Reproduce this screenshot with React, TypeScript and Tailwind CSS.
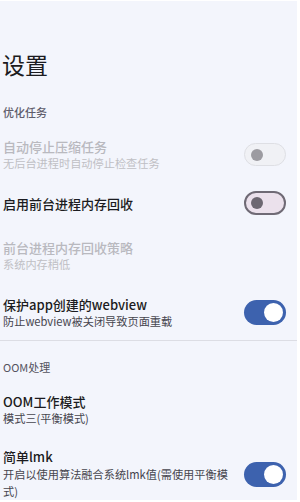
import React from 'react';

type SwitchState = 'disabled' | 'off' | 'on';

const font = { fontFamily: '"Noto Sans CJK SC", "Noto Sans", sans-serif' };

const Toggle: React.FC<{ state: SwitchState }> = ({ state }) => {
    if (state === 'on') {
        return (
            <div className="w-[42px] h-[25px] rounded-full bg-[#3d62ae] flex items-center justify-end pr-[3px] shrink-0">
                <div className="w-[19px] h-[19px] rounded-full bg-white" />
            </div>
        );
    }
    if (state === 'off') {
        return (
            <div className="w-[42px] h-[24px] rounded-full bg-[#ebe1ec] border-2 border-[#6f6a75] flex items-center pl-[5px] shrink-0">
                <div className="w-[12px] h-[12px] rounded-full bg-[#6c6771]" />
            </div>
        );
    }
    return (
        <div className="w-[42px] h-[23px] rounded-full bg-[#f0f1f5] border-[1.5px] border-[#dedfe4] flex items-center pl-[6px] shrink-0">
            <div className="w-[12px] h-[12px] rounded-full bg-[#9c9ba1]" />
        </div>
    );
};

interface ItemProps {
    title: string;
    summary?: string;
    disabled?: boolean;
    toggle?: SwitchState;
    className?: string;
}

const Item: React.FC<ItemProps> = ({ title, summary, disabled, toggle, className = '' }) => (
    <div className={`flex items-center pl-[3px] pr-[11px] ${className}`}>
        <div className="flex-1 min-w-0 pr-[12px]">
            <div className={`text-[13px] leading-[17px] font-medium ${disabled ? 'text-[#b9b9bf]' : 'text-[#1b1b20]'}`}>
                {title}
            </div>
            {summary && (
                <div className={`text-[11.2px] leading-[16px] ${disabled ? 'text-[#bfbfc4]' : 'text-[#46454e]'}`}>
                    {summary}
                </div>
            )}
        </div>
        {toggle && <Toggle state={toggle} />}
    </div>
);

const Section: React.FC<{ label: string; className?: string }> = ({ label, className = '' }) => (
    <div className={`flex items-center pl-[3px] text-[11px] font-medium text-[#5f5d6b] ${className}`}>
        {label}
    </div>
);

export default function App() {
    return (
        <div className="w-[300px] h-[502px] bg-white pt-[1px] pr-[3px] pb-[2px] overflow-hidden" style={font}>
            <div className="h-full bg-[#f3f5fc] flex flex-col">
                <div className="h-[99px] flex items-end pl-[2px] pb-[22px]">
                    <h1 className="text-[23px] leading-[28px] font-normal text-[#1b1b20]">设置</h1>
                </div>
                <Section label="优化任务" className="h-[26px]" />
                <Item
                    className="h-[59px]"
                    title="自动停止压缩任务"
                    summary="无后台进程时自动停止检查任务"
                    disabled
                    toggle="disabled"
                />
                <Item className="h-[38px]" title="启用前台进程内存回收" toggle="off" />
                <Item
                    className="h-[67px]"
                    title="前台进程内存回收策略"
                    summary="系统内存稍低"
                    disabled
                />
                <Item
                    className="h-[48px]"
                    title="保护app创建的webview"
                    summary="防止webview被关闭导致页面重载"
                    toggle="on"
                />
                <div className="h-[8px] flex items-center">
                    <div className="h-px w-full bg-[#dcdde4]" />
                </div>
                <Section label="OOM处理" className="h-[46px] font-normal text-[#55535f]" />
                <Item className="h-[39px]" title="OOM工作模式" summary="模式三(平衡模式)" />
                <div className="flex items-center pl-[3px] pr-[11px] pt-[19px]">
                    <div className="flex-1 min-w-0 pr-[10px]">
                        <div className="text-[13px] leading-[17px] font-medium text-[#1b1b20]">简单lmk</div>
                        <div className="text-[11.2px] leading-[17px] mt-[1px] text-[#46454e]">
                            开启以使用算法融合系统lmk值(需使用平衡模式)
                        </div>
                    </div>
                    <Toggle state="on" />
                </div>
            </div>
        </div>
    );
}
